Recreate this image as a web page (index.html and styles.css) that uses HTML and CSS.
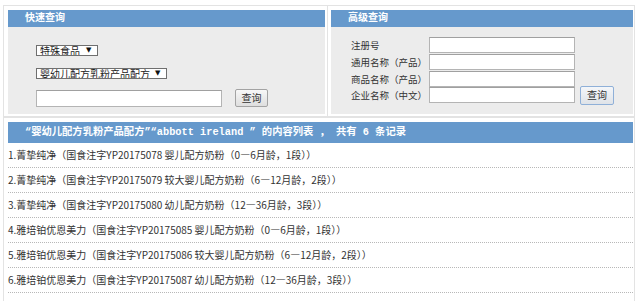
FILE: index.html
```html
<!DOCTYPE html>
<html lang="zh-CN">
<head>
<meta charset="utf-8">
<title>查询</title>
<link rel="stylesheet" href="styles.css">
</head>
<body>
<div class="page">
  <div class="top">
    <div class="box box-left">
      <div class="bar">快速查询</div>
      <div class="panel quick">
        <div class="sel sel1"><select><option>特殊食品</option></select></div>
        <div class="sel sel2"><select><option>婴幼儿配方乳粉产品配方</option></select></div>
        <div class="quick-row">
          <input class="txt txt-quick" type="text">
          <button class="btn" type="button">查询</button>
        </div>
      </div>
    </div>
    <div class="box box-right">
      <div class="bar">高级查询</div>
      <div class="panel adv">
        <div class="adv-grid">
          <label class="lbl">注册号</label><input class="txt" type="text"><span></span>
          <label class="lbl">通用名称（产品）</label><input class="txt" type="text"><span></span>
          <label class="lbl">商品名称（产品）</label><input class="txt" type="text"><span></span>
          <label class="lbl">企业名称（中文）</label><input class="txt" type="text"><button class="btn btn-blue" type="button">查询</button>
        </div>
      </div>
    </div>
  </div>
  <div class="list">
    <div class="list-bar">“婴幼儿配方乳粉产品配方”“abbott ireland ” 的内容列表 ， 共有 6 条记录</div>
    <div class="row">1.菁挚纯净（国食注字YP20175078 婴儿配方奶粉（0—6月龄，1段））</div>
    <div class="row">2.菁挚纯净（国食注字YP20175079 较大婴儿配方奶粉（6—12月龄，2段））</div>
    <div class="row">3.菁挚纯净（国食注字YP20175080 幼儿配方奶粉（12—36月龄，3段））</div>
    <div class="row">4.雅培铂优恩美力（国食注字YP20175085 婴儿配方奶粉（0—6月龄，1段））</div>
    <div class="row">5.雅培铂优恩美力（国食注字YP20175086 较大婴儿配方奶粉（6—12月龄，2段））</div>
    <div class="row">6.雅培铂优恩美力（国食注字YP20175087 幼儿配方奶粉（12—36月龄，3段））</div>
  </div>
</div>
</body>
</html>
```
FILE: styles.css
```css
html, body {
  margin: 0;
  padding: 0;
  background: #ffffff;
}
body {
  font-family: "Liberation Mono", "Noto Sans CJK SC", monospace;
  color: #333333;
}
.page {
  padding: 5px 0 0 3px;
  width: 632px;
}
.top {
  display: flex;
}
.box {
  border: 1px solid #e3e3e3;
}
.box-left {
  width: 317px;
  padding: 4px 2px 2px 4px;
  border-right: none;
}
.box-right {
  width: 302px;
  padding: 4px 1px 2px 3px;
}
.bar {
  height: 17px;
  line-height: 17px;
  background: #6699cc;
  color: #ffffff;
  font-weight: bold;
  font-size: 10px;
  padding-left: 17px;
}
.panel {
  background: #ececec;
  height: 87px;
  box-sizing: border-box;
}
.quick {
  padding: 18px 0 0 28px;
}
.sel {
  position: relative;
  display: block;
}
.sel select {
  appearance: none;
  -webkit-appearance: none;
  display: block;
  box-sizing: border-box;
  height: 11px;
  padding: 0 0 0 3px;
  margin: 0;
  border: 1px solid #6f6f6f;
  border-radius: 0;
  background: #ffffff;
  font-family: "Noto Sans CJK SC", sans-serif;
  font-size: 10px;
  line-height: 9px;
  color: #222222;
}
.sel::after {
  content: "▼";
  position: absolute;
  top: 1px;
  font-family: "DejaVu Sans", sans-serif;
  font-size: 7px;
  line-height: 9px;
  color: #111111;
  pointer-events: none;
}
.sel1 select { width: 62px; }
.sel1::after { left: 50px; }
.sel2 { margin-top: 12px; }
.sel2 select { width: 131px; }
.sel2::after { left: 119px; }
.quick-row {
  display: flex;
  align-items: flex-end;
  gap: 13px;
  margin-top: 10px;
}
.txt {
  box-sizing: border-box;
  height: 16px;
  margin: 0;
  padding: 0 2px;
  border: 1px solid #b4b4b4;
  border-top-color: #a0a0a0;
  background: #ffffff;
  border-radius: 0;
}
.txt-quick {
  width: 186px;
  height: 17px;
}
.btn {
  box-sizing: border-box;
  width: 33px;
  height: 18px;
  margin: 0;
  padding: 0;
  border: 1px solid #a3a3a3;
  border-radius: 2px;
  background: linear-gradient(#f7f7f7, #dedede);
  font-family: "Noto Sans CJK SC", sans-serif;
  font-size: 10px;
  line-height: 16px;
  color: #333333;
}
.btn-blue {
  width: 34px;
  height: 19px;
  margin-left: 5px;
  border-color: #8fb0d8;
  background: linear-gradient(#f4f6f9, #dfe3e8);
}
.adv {
  padding: 10px 0 0 20px;
}
.adv-grid {
  display: grid;
  grid-template-columns: 78px 146px 39px;
  grid-auto-rows: 16.67px;
  align-items: center;
}
.lbl {
  font-family: "Noto Sans CJK SC", sans-serif;
  font-size: 9.5px;
  line-height: 12px;
  color: #333333;
  white-space: nowrap;
}
.adv-grid .txt {
  width: 146px;
}
.list {
  width: 625px;
  border: 1px solid #e3e3e3;
  border-bottom: none;
  padding: 4px 1px 20px 4px;
}
.list-bar {
  height: 21px;
  line-height: 21px;
  background: #6699cc;
  color: #ffffff;
  font-weight: bold;
  font-size: 10.3px;
  padding-left: 17px;
  white-space: nowrap;
}
.row {
  height: 24px;
  line-height: 24px;
  border-bottom: 1px dotted #b8b8b8;
  font-family: "Noto Sans CJK SC", sans-serif;
  font-size: 10px;
  color: #333333;
  white-space: nowrap;
}
```
